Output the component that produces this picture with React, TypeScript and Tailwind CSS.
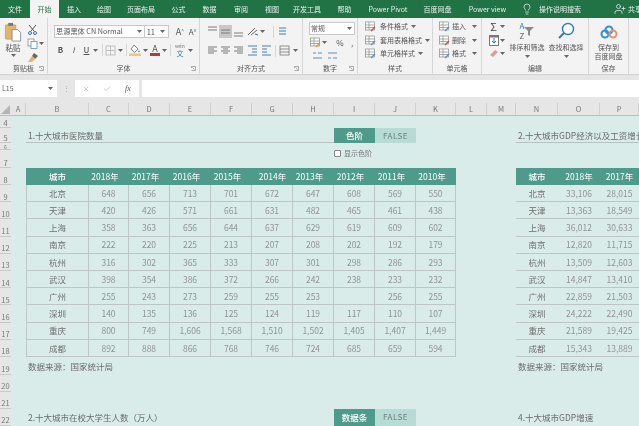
import { Lightbulb, UserPlus, X, Check } from 'lucide-react'
import type { ReactNode } from 'react'

const tabs = [
  { label: '文件', w: 'w-[30px]' },
  { label: '开始', w: 'w-[29px]', active: true },
  { label: '插入', w: 'w-[30px]' },
  { label: '绘图', w: 'w-[30px]' },
  { label: '页面布局', w: 'w-[44px]' },
  { label: '公式', w: 'w-[31px]' },
  { label: '数据', w: 'w-[31px]' },
  { label: '审阅', w: 'w-[32px]' },
  { label: '视图', w: 'w-[30px]' },
  { label: '开发工具', w: 'w-[40px]' },
  { label: '帮助', w: 'w-[35px]' },
  { label: 'Power Pivot', w: 'w-[52px]' },
  { label: '百度网盘', w: 'w-[47px]' },
  { label: 'Power view', w: 'w-[53px]' },
]

const columns = ['A', 'B', 'C', 'D', 'E', 'F', 'G', 'H', 'I', 'J', 'K', 'L', 'M', 'N', 'O', 'P']
const rowNumbers = [4, 5, 6, 7, 8, 9, 10, 11, 12, 13, 14, 15, 16, 17, 18, 19, 20, 21, 22]
const years = ['2018年', '2017年', '2016年', '2015年', '2014年', '2013年', '2012年', '2011年', '2010年']

const hospitals = [
  ['北京', '648', '656', '713', '701', '672', '647', '608', '569', '550'],
  ['天津', '420', '426', '571', '661', '631', '482', '465', '461', '438'],
  ['上海', '358', '363', '656', '644', '637', '629', '619', '609', '602'],
  ['南京', '222', '220', '225', '213', '207', '208', '202', '192', '179'],
  ['杭州', '316', '302', '365', '333', '307', '301', '298', '286', '293'],
  ['武汉', '398', '354', '386', '372', '266', '242', '238', '233', '232'],
  ['广州', '255', '243', '273', '259', '255', '253', '', '256', '255'],
  ['深圳', '140', '135', '136', '125', '124', '119', '117', '110', '107'],
  ['重庆', '800', '749', '1,606', '1,568', '1,510', '1,502', '1,405', '1,407', '1,449'],
  ['成都', '892', '888', '866', '768', '746', '724', '685', '659', '594'],
]

const gdp = [
  ['北京', '33,106', '28,015'],
  ['天津', '13,363', '18,549'],
  ['上海', '36,012', '30,633'],
  ['南京', '12,820', '11,715'],
  ['杭州', '13,509', '12,603'],
  ['武汉', '14,847', '13,410'],
  ['广州', '22,859', '21,503'],
  ['深圳', '24,222', '22,490'],
  ['重庆', '21,589', '19,425'],
  ['成都', '15,343', '13,889'],
]

function Caret() {
  return (
    <svg width="5" height="3" viewBox="0 0 5 3" className="shrink-0">
      <path d="M0 0h5L2.5 3z" fill="#666" />
    </svg>
  )
}

function Slot({ w = 'w-[13px]', children }: { w?: string; children?: ReactNode }) {
  return <div className={`flex h-[13px] shrink-0 items-center justify-center ${w}`}>{children}</div>
}

function Lines({ rows, color = '#7a7a7a' }: { rows: number[][]; color?: string }) {
  return (
    <svg width="11" height="11" viewBox="0 0 11 11">
      {rows.map(([x1, x2, y]) => (
        <path key={`${x1}-${y}`} d={`M${x1} ${y}H${x2}`} stroke={color} strokeWidth="1" />
      ))}
    </svg>
  )
}

function Group({ w, label, launcher, children }: { w: string; label: string; launcher?: boolean; children: ReactNode }) {
  return (
    <div className={`flex h-full shrink-0 flex-col border-r border-[#d6d6d6] ${w}`}>
      <div className="h-[44px] min-h-0">{children}</div>
      <div className="relative flex h-[12px] items-center justify-center text-[7px] leading-none text-[#555]">
        {label}
        {launcher && (
          <svg width="5" height="5" viewBox="0 0 5 5" className="absolute right-[3px] top-[4px]">
            <path d="M.5 2V.5H4.500M4.500.5V4.500H.5M1.500 1.500L3.500 3.500" stroke="#888" strokeWidth=".7" fill="none" />
          </svg>
        )}
      </div>
    </div>
  )
}

function PasteIcon() {
  return (
    <svg width="18" height="20" viewBox="0 0 18 21">
      <rect x="1" y="3" width="11" height="15" rx="1" fill="#e2b56c" stroke="#b98f4c" strokeWidth=".6" />
      <rect x="4" y="1" width="5" height="3" fill="#777" />
      <path d="M8 8h6l3 3v9H8z" fill="#fff" stroke="#777" strokeWidth=".8" />
    </svg>
  )
}

function Scissors() {
  return (
    <svg width="11" height="11" viewBox="0 0 11 11" fill="none" stroke="#555" strokeWidth="1">
      <path d="M2 1l5 6M9 1L4 7" />
      <circle cx="3" cy="9" r="1.500" stroke="#3b6ea5" />
      <circle cx="8" cy="9" r="1.500" stroke="#3b6ea5" />
    </svg>
  )
}

function CopyIcon() {
  return (
    <svg width="11" height="11" viewBox="0 0 11 11" fill="#fff" stroke="#8a8a8a" strokeWidth=".8">
      <rect x="1" y="1" width="6" height="7" />
      <rect x="4" y="3.500" width="6" height="7" stroke="#5f8fb8" />
    </svg>
  )
}

function BrushIcon() {
  return (
    <svg width="12" height="11" viewBox="0 0 12 11">
      <path d="M7 1l4 3-3 3-3-3z" fill="#666" />
      <path d="M5 4l3 3-3 3-4 0z" fill="#e2b56c" />
    </svg>
  )
}

function BordersIcon() {
  return (
    <svg width="11" height="11" viewBox="0 0 11 11" fill="none" stroke="#b5b5b5" strokeWidth=".8">
      <rect x="1" y="1" width="9" height="9" />
      <path d="M5.500 1v9M1 5.500h9" />
    </svg>
  )
}

function FillIcon() {
  return (
    <svg width="12" height="12" viewBox="0 0 12 12">
      <path d="M5 1l4 4-3.500 3.500-3.500-3.500z" fill="#fff" stroke="#666" strokeWidth=".8" />
      <path d="M10 6l1 2h-2z" fill="#4f81bd" />
      <rect x="0" y="9.500" width="12" height="2.500" fill="#f2c57c" />
    </svg>
  )
}

function FontColorIcon() {
  return (
    <div className="flex w-[11px] flex-col items-center">
      <span className="text-[9px] leading-[9px] text-[#555]">A</span>
      <div className="h-[3px] w-[10px] bg-[#b23a2e]" />
    </div>
  )
}

function TinyTable({ accent = '#5f8fb8' }: { accent?: string }) {
  return (
    <svg width="11" height="11" viewBox="0 0 11 11" fill="#fff" stroke="#8a8a8a" strokeWidth=".7">
      <rect x=".5" y="1" width="9" height="8" />
      <path d="M.5 4h9M.5 6.500h9M4 1v8" />
      <path d="M6 10l4-4" stroke={accent} strokeWidth="1.500" />
    </svg>
  )
}

function StyleRow({ label, icon }: { label: string; icon?: ReactNode }) {
  return (
    <div className="flex h-[13.500px] items-center gap-[3px] pl-[6px] text-[7px] leading-none text-[#555]">
      <Slot>{icon ?? <TinyTable />}</Slot>
      <span>{label}</span>
      <Caret />
    </div>
  )
}

function CellRow({ label, icon }: { label: string; icon: ReactNode }) {
  return (
    <div className="flex h-[13.500px] items-center pl-[5px] text-[7px] leading-none text-[#555]">
      <Slot>{icon}</Slot>
      <span className="ml-[1px] w-[20px]">{label}</span>
      <Caret />
    </div>
  )
}

function Ribbon() {
  return (
    <div className="flex h-[56px] bg-[#f3f3f3]">
      <Group w="w-[48px]" label="剪贴板" launcher>
        <div className="flex pt-[4px]">
          <div className="flex w-[26px] flex-col items-center">
            <PasteIcon />
            <span className="mt-[1px] text-[7.500px] leading-[9px] text-[#555]">粘贴</span>
            <div className="mt-[2px]"><Caret /></div>
          </div>
          <div className="flex flex-col gap-[1px] pt-[1px]">
            <Slot><Scissors /></Slot>
            <div className="flex items-center"><Slot><CopyIcon /></Slot><Caret /></div>
            <Slot><BrushIcon /></Slot>
          </div>
        </div>
      </Group>

      <Group w="w-[152px]" label="字体" launcher>
        <div className="pl-[6px] pt-[7px]">
          <div className="flex items-center">
            <div className="flex h-[13px] w-[92px] items-center justify-between border border-[#c8c8c8] bg-white pl-[1px] pr-[2px] text-[7.200px] leading-none text-[#555]">
              思源黑体 CN Normal
              <Caret />
            </div>
            <div className="flex h-[13px] w-[25px] items-center justify-between border border-l-0 border-[#c8c8c8] bg-white pl-[2px] pr-[3px] text-[7.500px] leading-none text-[#555]">
              11
              <Caret />
            </div>
            <span className="ml-[4px] w-[13px] text-center text-[9px] leading-none text-[#555]">A<sup className="text-[5px] text-[#3b6ea5]">^</sup></span>
            <span className="w-[13px] text-center text-[8px] leading-none text-[#555]">A<sup className="text-[5px] text-[#3b6ea5]">v</sup></span>
          </div>
          <div className="mt-[5px] flex items-center text-[#555]">
            <Slot><span className="text-[8px] font-bold leading-none">B</span></Slot>
            <Slot><span className="text-[8px] italic leading-none">I</span></Slot>
            <Slot><span className="text-[8px] font-medium leading-none underline">U</span></Slot>
            <Caret />
            <div className="ml-[4px] h-[12px] w-px bg-[#d6d6d6]" />
            <Slot w="w-[15px]"><BordersIcon /></Slot>
            <Caret />
            <div className="ml-[3px] h-[12px] w-px bg-[#d6d6d6]" />
            <Slot w="w-[16px]"><FillIcon /></Slot>
            <Caret />
            <Slot w="w-[14px]"><FontColorIcon /></Slot>
            <Caret />
            <div className="ml-[3px] h-[12px] w-px bg-[#d6d6d6]" />
            <div className="ml-[3px] flex w-[12px] flex-col items-center">
              <span className="text-[5px] leading-[6px] text-[#777]">wén</span>
              <span className="text-[7px] leading-[8px] text-[#3b7ea5]">文</span>
            </div>
            <div className="ml-[2px]"><Caret /></div>
          </div>
        </div>
      </Group>

      <Group w="w-[103px]" label="对齐方式" launcher>
        <div className="pl-[6px] pt-[7px]">
          <div className="flex items-center">
            <Slot><Lines rows={[[1, 10, 1], [1, 10, 4]]} /></Slot>
            <div className="flex h-[13px] w-[13px] items-center justify-center bg-[#c8c8c8]">
              <Lines rows={[[1, 10, 4], [1, 10, 7]]} />
            </div>
            <Slot><Lines rows={[[1, 10, 7], [1, 10, 10]]} /></Slot>
            <Slot w="w-[15px]">
              <svg width="12" height="11" viewBox="0 0 12 11" fill="none" stroke="#666" strokeWidth="1">
                <path d="M1 9l7-7M4 9l6-5" />
                <path d="M8 8l3 1" stroke="#3b6ea5" />
              </svg>
            </Slot>
            <Caret />
            <div className="ml-[8px] h-[12px] w-px bg-[#d6d6d6]" />
            <Slot w="w-[17px]"><Lines rows={[[2, 9, 2], [2, 9, 5], [2, 9, 8]]} color="#3b7ea5" /></Slot>
          </div>
          <div className="mt-[6px] flex items-center">
            <Slot><Lines rows={[[1, 10, 2], [1, 7, 4], [1, 10, 6], [1, 7, 8]]} /></Slot>
            <Slot><Lines rows={[[1, 10, 2], [3, 8, 4], [1, 10, 6], [3, 8, 8]]} /></Slot>
            <Slot><Lines rows={[[1, 10, 2], [4, 10, 4], [1, 10, 6], [4, 10, 8]]} /></Slot>
            <Slot w="w-[15px]"><Lines rows={[[1, 10, 1], [5, 10, 4], [5, 10, 7], [1, 10, 10]]} color="#4c7fa8" /></Slot>
            <Slot><Lines rows={[[1, 10, 1], [1, 6, 4], [1, 6, 7], [1, 10, 10]]} color="#4c7fa8" /></Slot>
            <div className="ml-[2px] h-[12px] w-px bg-[#d6d6d6]" />
            <Slot w="w-[17px]">
              <svg width="11" height="11" viewBox="0 0 11 11" fill="none" stroke="#777" strokeWidth=".8">
                <rect x="1" y="1" width="9" height="9" />
                <path d="M1 4h9M1 7h9" />
              </svg>
            </Slot>
            <Caret />
          </div>
        </div>
      </Group>

      <Group w="w-[55px]" label="数字" launcher>
        <div className="pl-[6px] pt-[4px]">
          <div className="flex h-[13px] w-[46px] items-center justify-between border border-[#c8c8c8] bg-white pl-[1px] pr-[2px] text-[7px] leading-none text-[#555]">
            常规
            <Caret />
          </div>
          <div className="mt-[1px] flex h-[13px] items-center text-[8px] leading-none text-[#555]">
            <Slot><TinyTable accent="#d99a2b" /></Slot>
            <Caret />
            <span className="ml-[6px] w-[14px] text-center">%</span>
            <span className="w-[10px] text-center">,</span>
          </div>
          <div className="flex h-[13px] items-center">
            <Slot w="w-[16px]"><Lines rows={[[1, 4, 3], [6, 10, 3], [1, 10, 8]]} color="#5f8fb8" /></Slot>
            <Slot w="w-[14px]"><Lines rows={[[1, 10, 3], [1, 4, 8], [6, 10, 8]]} color="#5f8fb8" /></Slot>
          </div>
        </div>
      </Group>

      <Group w="w-[75px]" label="样式">
        <div className="pt-[2px]">
          <StyleRow label="条件格式" icon={<TinyTable accent="#c0504d" />} />
          <StyleRow label="套用表格格式" />
          <StyleRow label="单元格样式" />
        </div>
      </Group>

      <Group w="w-[49px]" label="单元格">
        <div className="pt-[2px]">
          <CellRow label="插入" icon={<TinyTable />} />
          <CellRow label="删除" icon={<TinyTable accent="#c0504d" />} />
          <CellRow label="格式" icon={<TinyTable />} />
        </div>
      </Group>

      <Group w="w-[107px]" label="编辑">
        <div className="flex pl-[5px] pt-[2px]">
          <div className="flex w-[20px] flex-col">
            <div className="flex h-[13.500px] items-center">
              <Slot><span className="text-[11px] leading-none text-[#444]">Σ</span></Slot>
              <Caret />
            </div>
            <div className="flex h-[13.500px] items-center">
              <Slot>
                <svg width="10" height="11" viewBox="0 0 10 11">
                  <rect x=".5" y=".5" width="9" height="10" fill="#fff" stroke="#777" />
                  <rect x=".5" y=".5" width="9" height="2" fill="#777" />
                  <path d="M5 3v5M3 6l2 2 2-2" stroke="#2f78c4" fill="none" />
                </svg>
              </Slot>
              <Caret />
            </div>
            <div className="flex h-[13.500px] items-center">
              <Slot>
                <svg width="10" height="9" viewBox="0 0 10 9"><path d="M6 1l3 2-5 5-3-2z" fill="#e39a9a" /></svg>
              </Slot>
              <Caret />
            </div>
          </div>
          <div className="flex w-[40px] flex-col items-center">
            <div className="flex h-[22px] items-center">
              <div className="flex flex-col items-center text-[8px] leading-[10px]">
                <span className="text-[#2f78c4]">A</span>
                <span className="text-[#666]">Z</span>
              </div>
              <svg width="10" height="9" viewBox="0 0 10 9"><path d="M0 0h10L6 4v5L4 8V4z" fill="#8a8a8a" /></svg>
            </div>
            <span className="mt-[1px] whitespace-nowrap text-[7px] leading-[9px] text-[#555]">排序和筛选</span>
            <div className="mt-[3px]"><Caret /></div>
          </div>
          <div className="flex w-[38px] flex-col items-center">
            <div className="flex h-[22px] items-center">
              <svg width="18" height="18" viewBox="0 0 18 18" fill="none">
                <circle cx="11" cy="7" r="5.500" stroke="#2f78c4" strokeWidth="1.400" fill="#fff" />
                <path d="M7 11l-5 5" stroke="#2f78c4" strokeWidth="2" />
              </svg>
            </div>
            <span className="mt-[1px] whitespace-nowrap text-[7px] leading-[9px] text-[#555]">查找和选择</span>
            <div className="mt-[3px]"><Caret /></div>
          </div>
        </div>
      </Group>

      <Group w="w-[40px]" label="保存">
        <div className="flex flex-col items-center pt-[5px]">
          <div className="flex h-[17px] items-center">
            <svg width="18" height="14" viewBox="0 0 18 14" fill="none" strokeWidth="2">
              <circle cx="9" cy="5" r="3.500" stroke="#2f8fe0" />
              <circle cx="5" cy="9" r="3.500" stroke="#2f8fe0" />
              <circle cx="13" cy="9" r="3.500" stroke="#e8916a" />
            </svg>
          </div>
          <span className="mt-[3px] text-[7px] leading-[9px] text-[#555]">保存到</span>
          <span className="whitespace-nowrap text-[7px] leading-[9px] text-[#555]">百度网盘</span>
        </div>
      </Group>
    </div>
  )
}

function FormulaBar() {
  return (
    <div className="h-[23px] bg-[#e6e6e6] pb-[6px]">
      <div className="flex h-[17px] items-stretch">
        <div className="flex w-[57px] items-center justify-between bg-white pl-[2px] pr-[4px] text-[7px] leading-none text-[#666]">
          L15
          <Caret />
        </div>
        <div className="flex w-[18px] items-center justify-center text-[7px] leading-none text-[#aaa]">⋮</div>
        <div className="flex w-[64px] items-center bg-white text-[#b5b5b5]">
          <div className="flex w-[15px] justify-end"><X size={8} /></div>
          <div className="flex w-[21px] justify-end"><Check size={8} /></div>
          <span className="ml-[14px] font-['Liberation_Serif',serif] text-[8px] italic leading-none text-[#555]">fx</span>
        </div>
        <div className="ml-[3px] flex-1 bg-white" />
      </div>
    </div>
  )
}

function Toggle({ label, name }: { label: string; name: string }) {
  return (
    <div className={`col-span-2 col-start-10 flex ${name}`}>
      <div className="flex w-[41px] items-center justify-center bg-[#4e9a8b] text-[8.500px] font-medium leading-none text-white">{label}</div>
      <div className="flex flex-1 items-center justify-center bg-[#b7dbd5] text-[8px] leading-none tracking-[0.5px] text-[#6d7f7c]">FALSE</div>
    </div>
  )
}

function HospitalTable() {
  return (
    <div className="col-span-10 col-start-3 row-span-11 row-start-5 grid grid-cols-[63px_40px_41px_41px_41px_41px_41px_41px_41px_40px] grid-rows-[17px_repeat(10,17.2px)] text-[8.500px] leading-none">
      <div className="flex items-center justify-center bg-[#4e9a8b] font-medium text-white">城市</div>
      {years.map((y, i) => (
        <div key={y} className={`flex items-center justify-center bg-[#4e9a8b] text-white ${i === 4 ? '' : 'pr-2'}`}>
          {y}
        </div>
      ))}
      {hospitals.map((row) =>
        row.map((cell, i) => (
          <div
            key={`${row[0]}-${i}`}
            className={`flex items-center justify-center border-b border-r border-[#bcc6c4] ${
              i === 0 ? 'border-l text-[#6f6f6f]' : 'text-[#8f9493]'
            }`}
          >
            {cell}
          </div>
        )),
      )}
    </div>
  )
}

function GdpTable() {
  return (
    <div className="col-span-3 col-start-15 row-span-11 row-start-5 grid grid-cols-[42px_42px_39px] grid-rows-[17px_repeat(10,17.2px)] text-[8.500px] leading-none">
      <div className="flex items-center justify-center bg-[#4e9a8b] font-medium text-white">城市</div>
      <div className="flex items-center justify-center bg-[#4e9a8b] text-white">2018年</div>
      <div className="flex items-center justify-center whitespace-nowrap bg-[#4e9a8b] text-white">2017年</div>
      {gdp.map((row) =>
        row.map((cell, i) => (
          <div
            key={`${row[0]}-${i}`}
            className={`flex items-center justify-center border-b border-[#bcc6c4] ${i === 0 ? 'text-[#6f6f6f]' : 'text-[#8f9493]'}`}
          >
            {cell}
          </div>
        )),
      )}
    </div>
  )
}

function Sheet() {
  return (
    <div className="grid h-[310px] grid-cols-[11px_15px_63px_40px_41px_41px_41px_41px_41px_41px_41px_40px_31px_29px_42px_42px_39px] grid-rows-[12px_15px_7px_18px_17px_repeat(10,17.2px)_18px_17px_17px_17px] overflow-hidden bg-[#d9ecea]">
      <div className="col-start-1 row-span-full row-start-1 flex flex-col bg-[#e6e6e6]">
        {rowNumbers.map((n) => (
          <div
            key={n}
            className={`flex justify-center border-b border-[#c9c9c9] leading-none text-[#777] ${
              n === 4 ? 'h-[12px] items-end pb-[1px] text-[7.500px]' : n === 5 ? 'h-[15px] items-end pb-[1px] text-[7.500px]' : n === 6 ? 'h-[7px] items-center text-[5px]' : n === 7 || n === 19 ? 'h-[18px] items-end pb-[1px] text-[7.500px]' : n >= 9 && n <= 18 ? 'h-[17.2px] items-end pb-[1px] text-[7.500px]' : 'h-[17px] items-end pb-[1px] text-[7.500px]'
            }`}
          >
            {n}
          </div>
        ))}
      </div>

      <div className="col-span-7 col-start-3 row-start-2 flex items-center border-b border-[#b5c2c0] pl-[2px] text-[8.500px] leading-none text-[#6a6a6a]">
        1.十大城市医院数量
      </div>
      <Toggle label="色阶" name="row-start-2" />
      <div className="col-span-3 col-start-10 row-start-4 flex items-start gap-[3px] text-[7px] leading-[7px] text-[#777]">
        <div className="h-[7px] w-[7px] rounded-[1px] border border-[#888] bg-white" />
        显示色阶
      </div>
      <div className="col-span-3 col-start-15 row-start-2 flex items-center overflow-hidden whitespace-nowrap border-b border-[#b5c2c0] pl-[2px] text-[8.500px] leading-none text-[#6a6a6a]">
        2.十大城市GDP经济以及工资增长
      </div>

      <HospitalTable />
      <GdpTable />

      <div className="col-span-4 col-start-3 row-start-16 flex items-center pl-[2px] text-[8.500px] leading-none text-[#6a6a6a]">
        数据来源：国家统计局
      </div>
      <div className="col-span-3 col-start-15 row-start-16 flex items-center pl-[2px] text-[8.500px] leading-none text-[#6a6a6a]">
        数据来源：国家统计局
      </div>

      <div className="col-span-7 col-start-3 row-start-19 flex items-center pl-[2px] text-[8.500px] leading-none text-[#6a6a6a]">
        2.十大城市在校大学生人数（万人）
      </div>
      <Toggle label="数据条" name="row-start-19" />
      <div className="col-span-3 col-start-15 row-start-19 flex items-center pl-[2px] text-[8.500px] leading-none text-[#6a6a6a]">
        4.十大城市GDP增速
      </div>
    </div>
  )
}

export default function App() {
  return (
    <div className="h-[426px] w-[639px] overflow-hidden bg-[#e6e6e6] font-['Noto_Sans_CJK_SC','Noto_Sans',sans-serif] blur-[0.3px]">
      <div className="flex h-[18px] bg-[#217346] text-[7px] leading-none text-[#e8f1ec]">
        {tabs.map((t) => (
          <div
            key={t.label}
            className={`flex shrink-0 items-center justify-center whitespace-nowrap ${t.w} ${t.active ? 'bg-[#f3f3f3] text-[#217346]' : ''}`}
          >
            {t.label}
          </div>
        ))}
        <div className="ml-[7px] flex shrink-0 items-center gap-[6px] whitespace-nowrap">
          <Lightbulb size={12} strokeWidth={1.500} />
          操作说明搜索
        </div>
        <div className="ml-[33px] flex shrink-0 items-center gap-[2px] whitespace-nowrap">
          <UserPlus size={12} strokeWidth={1.500} />
          共享
        </div>
      </div>
      <Ribbon />
      <div className="h-[6px] border-t border-[#d2d2d2] bg-[#e6e6e6]" />
      <FormulaBar />
      <div className="grid h-[13px] grid-cols-[11px_15px_63px_40px_41px_41px_41px_41px_41px_41px_41px_40px_31px_29px_42px_42px_39px] border-b border-[#bdbdbd] bg-[#e6e6e6] text-[7.500px] leading-none text-[#777]">
        <div className="flex items-end justify-end pb-[1px] pr-[1px]">
          <svg width="9" height="9" viewBox="0 0 9 9"><path d="M9 0v9H0z" fill="#b5b5b5" /></svg>
        </div>
        {columns.map((c) => (
          <div key={c} className="flex items-center justify-center border-r border-[#cfcfcf]">{c}</div>
        ))}
      </div>
      <Sheet />
    </div>
  )
}
